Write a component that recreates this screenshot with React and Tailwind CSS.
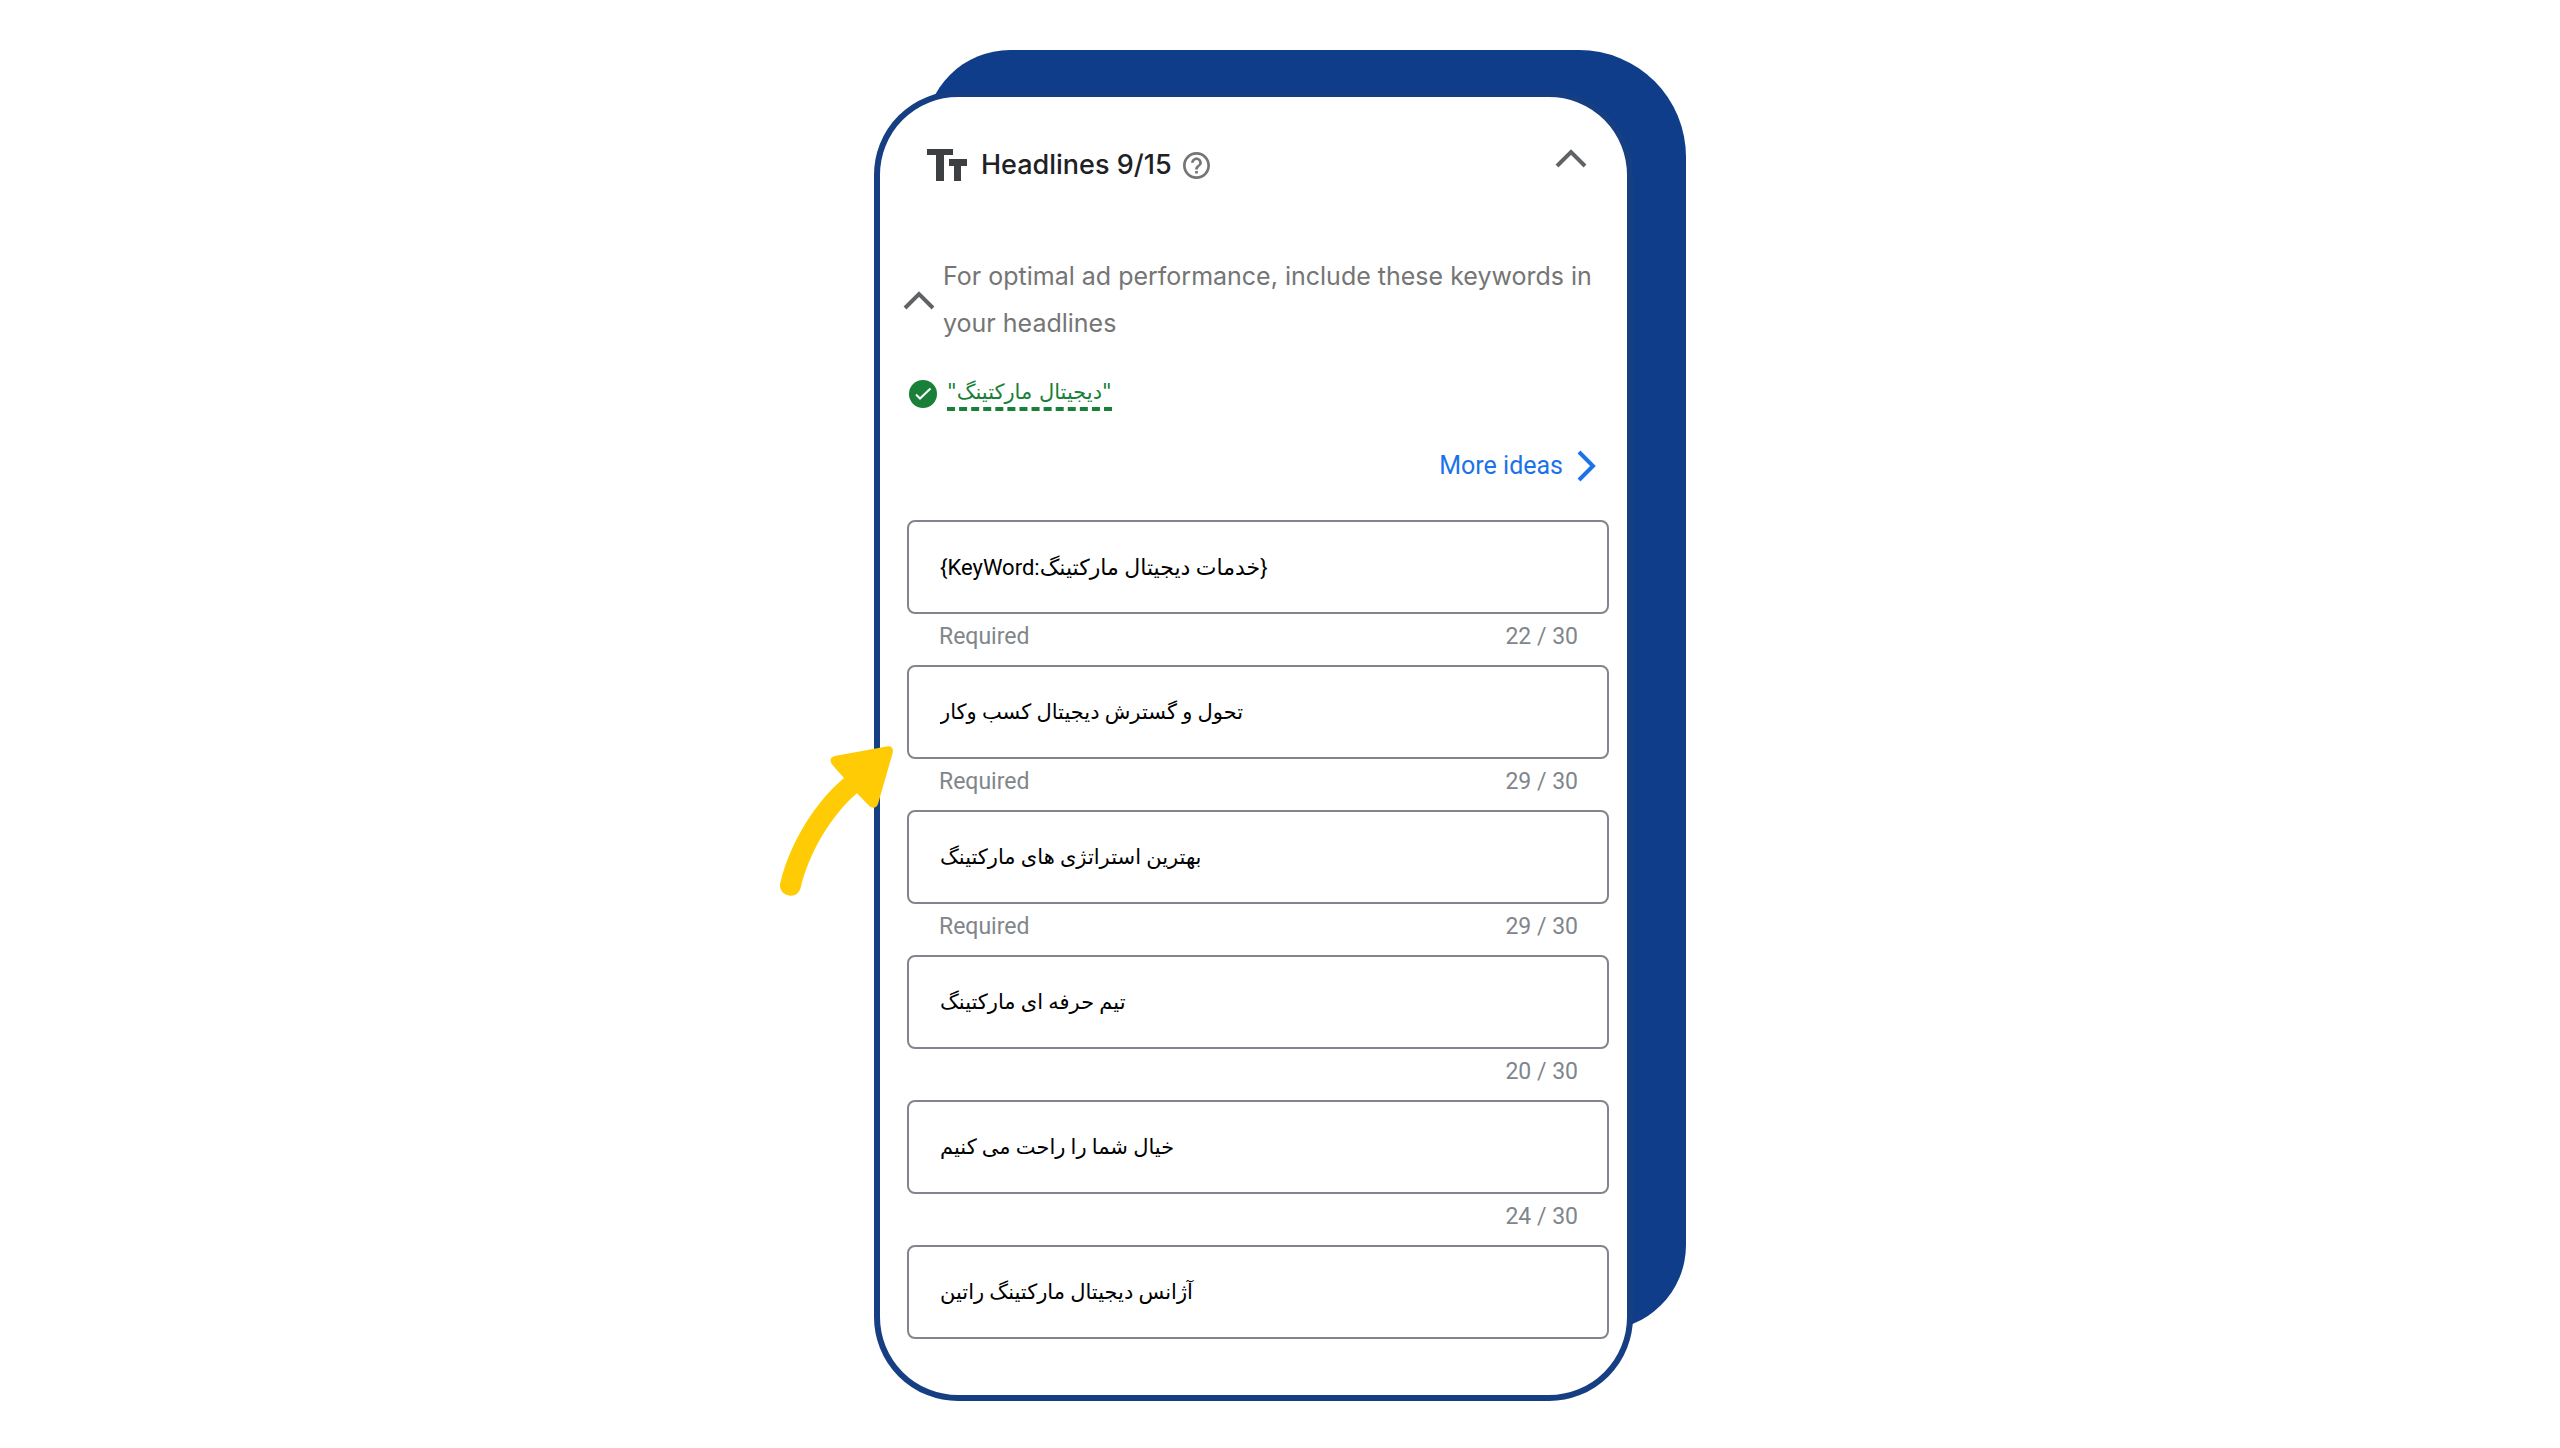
import React from 'react';

const headlines = [
  { text: '{KeyWord:خدمات دیجیتال مارکتینگ}', required: true, count: '22 / 30' },
  { text: 'تحول و گسترش دیجیتال کسب وکار', required: true, count: '29 / 30' },
  { text: 'بهترین استراتژی های مارکتینگ', required: true, count: '29 / 30' },
  { text: 'تیم حرفه ای مارکتینگ', required: false, count: '20 / 30' },
  { text: 'خیال شما را راحت می کنیم', required: false, count: '24 / 30' },
  { text: 'آژانس دیجیتال مارکتینگ راتین', required: false, count: null },
];

const ChevronUp = () => (
  <svg viewBox="0 0 32 19" className="h-[19px] w-8" fill="none" aria-hidden="true">
    <path d="M2 17L16 3l14 14" stroke="#5f6368" strokeWidth="4" />
  </svg>
);

const ChevronRight = () => (
  <svg viewBox="0 0 20 32" className="h-8 w-5" fill="none" aria-hidden="true">
    <path d="M2 2l14 14L2 30" stroke="#1a73e8" strokeWidth="4" />
  </svg>
);

const TitleIcon = () => (
  <svg viewBox="0 0 40 32" className="h-8 w-10" fill="#3c4043" aria-hidden="true">
    <path d="M0 0h26v6h-9v26H9V6H0z" />
    <path d="M22 10h18v7h-6v15h-7V17h-5z" />
  </svg>
);

const HelpIcon = () => (
  <svg viewBox="2 2 20 20" className="h-[27px] w-[27px]" fill="#757575" aria-hidden="true">
    <path d="M11 18h2v-2h-2v2zm1-16C6.48 2 2 6.48 2 12s4.48 10 10 10 10-4.480 10-10S17.520 2 12 2zm0 18c-4.410 0-8-3.590-8-8s3.590-8 8-8 8 3.590 8 8-3.590 8-8 8zm0-14c-2.210 0-4 1.790-4 4h2c0-1.100.9-2 2-2s2 .9 2 2c0 2-3 1.750-3 5h2c0-2.250 3-2.500 3-5 0-2.210-1.790-4-4-4z" />
  </svg>
);

const CheckIcon = () => (
  <svg viewBox="0 0 28 28" className="h-7 w-7" aria-hidden="true">
    <circle cx="14" cy="14" r="14" fill="#188038" />
    <path d="M7 14.500l4 4L21.500 8.500" fill="none" stroke="#fff" strokeWidth="2" />
  </svg>
);

const Arrow = () => (
  <svg
    viewBox="60 317 339 450"
    className="absolute top-[696px] left-[-94px] h-[150px] w-[113px]"
    fill="#ffcb05"
    aria-hidden="true"
  >
    <path d="M384 318L224 347Q206 352 214 369Q218 376 252 413C170 482 92 600 61 727C56 748 70 765 91 766C108 766 118 756 122 742C146 640 212 526 291 459L328 497C338 506 350 502 354 491L398 338C401 324 395 317 384 318Z" />
  </svg>
);

const HeadlineField = ({ id, text, required, count }) => (
  <li>
    <input
      id={id}
      type="text"
      dir="ltr"
      aria-label="Headline"
      defaultValue={text}
      className={`block h-[94px] w-full rounded-lg border-2 border-[#80868b] bg-white px-[31px] font-['Roboto','DejaVu_Sans',sans-serif] text-black outline-none ${
        text.startsWith('{') ? 'text-[22px]' : 'text-[21px]'
      }`}
    />
    {count && (
      <div className="flex h-[51px] justify-between pt-[6px] pr-[31px] pl-8 font-['Roboto',sans-serif] text-[23px] leading-[34px] text-[#80868b]">
        <span>{required ? 'Required' : ''}</span>
        <span>{count}</span>
      </div>
    )}
  </li>
);

const App = () => {
  return (
    <main className="min-h-screen bg-white pt-[50px] pb-[47px]">
      <div className="relative mx-auto max-w-[812px]">
        {/* Blue plate behind the card */}
        <div className="absolute top-0 right-0 bottom-[71px] left-[51px] rounded-[85px] rounded-tr-[107px] bg-[#0f3d8a]" />

        <div className="pt-[41px] pr-[53px]">
          <section className="relative rounded-[84px] border-[6px] border-[#153f82] bg-white pt-[52px] pb-14">
            <header className="flex items-start justify-between pr-10 pl-[47px]">
              <div className="flex items-center">
                <TitleIcon />
                <h1 className="ml-[14px] font-['Inter',sans-serif] text-[27px] leading-8 font-medium text-[#202124]">
                  Headlines 9/15
                </h1>
                <button type="button" aria-label="Help" className="ml-[11px]">
                  <HelpIcon />
                </button>
              </div>
              <button type="button" aria-label="Collapse headlines">
                <ChevronUp />
              </button>
            </header>

            <div className="mt-[72px] flex items-center gap-2 pr-4 pl-[23px]">
              <button type="button" aria-label="Collapse keywords">
                <ChevronUp />
              </button>
              <p className="font-['Inter',sans-serif] text-[25px] leading-[47px] text-[#757575]">
                For optimal ad performance, include these keywords in your headlines
              </p>
            </div>

            <div className="mt-[30px] flex h-[34px] items-center gap-[10px] pl-[29px]">
              <CheckIcon />
              <span
                dir="rtl"
                className="h-[34px] border-b-4 border-dashed border-[#188038] font-['DejaVu_Sans',sans-serif] text-[21px] leading-[30px] text-[#188038]"
              >
                "دیجیتال مارکتینگ"
              </span>
            </div>

            <div className="mt-[39px] flex justify-end pr-[30px]">
              <button
                type="button"
                className="flex items-center gap-[14px] font-['Roboto',sans-serif] text-[25px] leading-8 text-[#1a73e8]"
              >
                More ideas
                <ChevronRight />
              </button>
            </div>

            <ul className="mt-[38px] pr-[18px] pl-[27px]">
              {headlines.map((item, index) => (
                <HeadlineField key={item.text} id={`headline-${index + 1}`} {...item} />
              ))}
            </ul>
          </section>
        </div>

        <Arrow />
      </div>
    </main>
  );
};

export default App;
